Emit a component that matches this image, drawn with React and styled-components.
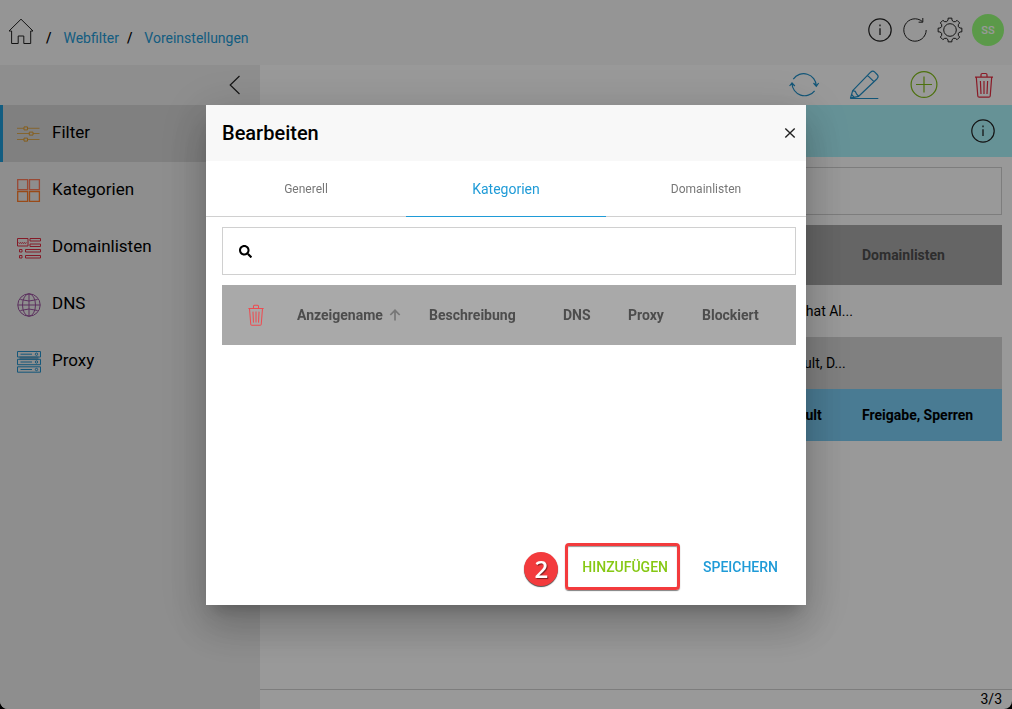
import { useState } from 'react'
import styled, { createGlobalStyle } from 'styled-components'
import { FaSearch } from 'react-icons/fa'

const GlobalStyle = createGlobalStyle`
  * {
    box-sizing: border-box;
  }

  body {
    margin: 0;
    background: #000;
    color: #000;
    font-family: Roboto, 'Liberation Sans', sans-serif;
    font-size: 14px;
  }

  button,
  input {
    font-family: inherit;
  }

  button {
    padding: 0;
    border: 0;
    background: none;
    cursor: pointer;
  }
`

const Page = styled.div`
  display: flex;
  flex-direction: column;
  min-height: 100vh;
  overflow: hidden;
  border-radius: 0 0 8px 8px;
  background: #fff;
`

const Header = styled.header`
  display: flex;
  justify-content: space-between;
  align-items: flex-start;
  height: 65px;
  padding: 14px 8px 0;
  background: #f8f8f8;
`

const Breadcrumb = styled.nav`
  display: flex;
  align-items: flex-start;
  padding-top: 4px;
  line-height: 20px;
`

const Crumbs = styled.ol`
  display: flex;
  margin: 10px 0 0 12px;
  padding: 0;
  list-style: none;

  li::before {
    content: '/';
    margin-right: 12px;
    font-weight: 500;
  }

  li + li {
    margin-left: 8px;
  }

  a {
    color: #1f9bd7;
    text-decoration: none;
  }
`

const HeaderActions = styled.div`
  display: flex;
  align-items: center;
  gap: 9px;
`

const IconButton = styled.button`
  display: flex;
  align-items: center;
  justify-content: center;
  width: ${(props) => props.$size || 26}px;
  height: ${(props) => props.$size || 26}px;
  color: ${(props) => props.$color || '#222'};
`

const Avatar = styled.button`
  width: 32px;
  height: 32px;
  border-radius: 50%;
  background: #98ff7b;
  color: #fff;
  font-size: 11px;
  font-weight: 500;
`

const Body = styled.div`
  display: flex;
  flex: 1;
`

const Sidebar = styled.aside`
  flex: 0 0 260px;
  background: #ededed;
`

const Collapse = styled.div`
  display: flex;
  justify-content: flex-end;
  padding: 7px 12px 7px 0;
`

const MenuItem = styled.a`
  display: flex;
  align-items: center;
  gap: 11px;
  height: 57px;
  padding-left: 14px;
  border-left: 3px solid ${(props) => (props.$active ? '#1f9bd7' : 'transparent')};
  background: ${(props) => (props.$active ? '#d5d5d5' : 'transparent')};
  color: #000;
  font-size: 17px;
  text-decoration: none;

  span {
    padding-bottom: 4px;
  }
`

const Main = styled.main`
  display: flex;
  flex: 1;
  flex-direction: column;
  min-width: 0;
`

const Toolbar = styled.div`
  display: flex;
  justify-content: flex-end;
  gap: 20px;
  height: 40px;
  padding-right: 8px;
`

const Banner = styled.div`
  display: flex;
  align-items: center;
  justify-content: flex-end;
  height: 52px;
  padding-right: 16px;
  background: #aaf3fb;
`

const Content = styled.div`
  flex: 1;
  padding: 10px;
`

const SearchField = styled.label`
  display: flex;
  align-items: center;
  gap: 12px;
  height: 48px;
  margin-bottom: 10px;
  padding: 0 16px;
  border: 1px solid #d0d0d0;

  input {
    flex: 1;
    height: 30px;
    border: 0;
    outline: 0;
    background: none;
    font-size: 14px;
  }
`

const Table = styled.table`
  width: 100%;
  table-layout: fixed;
  border-collapse: collapse;

  th,
  td {
    height: 52px;
    padding: 0;
    text-align: left;
    white-space: nowrap;
  }

  th {
    height: 60px;
    background: #a9a9a9;
    color: #4d4d4d;
    font-weight: 700;
  }
`

const Row = styled.tr`
  background: ${(props) => (props.$selected ? '#7bcdf5' : props.$striped ? '#d5d5d5' : '#fff')};
  font-weight: ${(props) => (props.$selected ? 700 : 400)};
`

const Footer = styled.footer`
  height: 20px;
  padding-right: 10px;
  border-top: 1px solid #d0d0d0;
  line-height: 18px;
  text-align: right;
`

const Overlay = styled.div`
  position: fixed;
  inset: 0;
  display: flex;
  align-items: center;
  justify-content: center;
  padding-top: 1px;
  background: rgba(0, 0, 0, 0.4);
`

const Dialog = styled.section`
  display: flex;
  flex-direction: column;
  width: 600px;
  max-width: 100%;
  min-height: 500px;
  background: #fff;
  box-shadow: 0 11px 15px -7px rgba(0, 0, 0, 0.2), 0 24px 38px 3px rgba(0, 0, 0, 0.14),
    0 9px 46px 8px rgba(0, 0, 0, 0.12);
`

const DialogHeader = styled.div`
  display: flex;
  align-items: center;
  justify-content: space-between;
  height: 56px;
  padding: 0 8px 0 16px;
  background: #f8f8f8;
`

const DialogTitle = styled.h2`
  margin: 0;
  font-size: 20px;
  font-weight: 500;
`

const Tabs = styled.div`
  display: grid;
  grid-template-columns: repeat(3, 1fr);
`

const Tab = styled.button`
  height: 56px;
  border-bottom: 1px solid ${(props) => (props.$active ? '#1f9bd7' : '#d0d0d0')};
  color: ${(props) => (props.$active ? '#1f9bd7' : '#777')};
  font-size: ${(props) => (props.$active ? 14 : 12)}px;
`

const DialogContent = styled.div`
  flex: 1;
  padding: 10px 10px 10px 16px;
`

const Sort = styled.span`
  display: flex;
  align-items: center;
  gap: 6px;

  svg {
    color: #777;
  }
`

const RowAction = styled.div`
  padding-left: 22px;
`

const DialogActions = styled.div`
  display: flex;
  justify-content: flex-end;
  gap: 11px;
  padding: 0 16px 20px;
`

const ActionButton = styled.button`
  height: 36px;
  padding: 0 12px;
  color: ${(props) => props.$color};
  font-size: 14px;
  font-weight: 500;
  text-transform: uppercase;
`

const Highlight = styled.div`
  position: relative;

  &::after {
    content: '';
    position: absolute;
    inset: -6px 0 -5px -5px;
    border: 3px solid #f33b3d;
    border-radius: 4px;
    box-shadow: 0 1px 1px rgba(0, 0, 0, 0.5), inset 0 1px 1px rgba(0, 0, 0, 0.4);
    pointer-events: none;
  }
`

const Step = styled.span`
  position: absolute;
  top: 3px;
  right: calc(100% + 12px);
  width: 34px;
  height: 34px;
  border-radius: 50%;
  background: #f33b3d;
  box-shadow: 0 1px 1px rgba(0, 0, 0, 0.7);
  color: #fff;
  font: 600 24px/34px 'Open Sans', sans-serif;
  text-align: center;
  text-shadow: 1px 1px 1px rgba(0, 0, 0, 0.5);
`

function Icon({ size = 26, children }) {
  return (
    <svg
      width={size}
      height={size}
      viewBox={`0 0 ${size} ${size}`}
      fill="none"
      stroke="currentColor"
      aria-hidden="true"
    >
      {children}
    </svg>
  )
}

const HomeIcon = () => (
  <Icon>
    <path d="M1 13 13 1.2 25 13H22.7V25.5H15.8V18H10.2V25.5H3.6V13Z" />
  </Icon>
)

const InfoIcon = () => (
  <Icon>
    <circle cx="13" cy="13" r="11.2" strokeWidth="1.2" />
    <path d="M13 11.3v6.7M13 7.5v1.8" strokeWidth="1.3" />
  </Icon>
)

const ReloadIcon = () => (
  <Icon>
    <path d="M24.2 13A11.2 11.2 0 1 1 20.3 4.5M20.8 1v4.2h-4.2" />
  </Icon>
)

const polar = (angle, radius) => {
  const rad = (angle * Math.PI) / 180
  return `${(13 + radius * Math.cos(rad)).toFixed(2)} ${(13 + radius * Math.sin(rad)).toFixed(2)}`
}

const gearPath = [0, 45, 90, 135, 180, 225, 270, 315]
  .map(
    (a, i) =>
      `${i ? 'L' : 'M'}${polar(a - 9, 12)}L${polar(a + 9, 12)}L${polar(a + 11, 10.2)}Q${polar(a + 22.5, 7.8)} ${polar(a + 34, 10.2)}`
  )
  .join('')

const GearIcon = () => (
  <Icon>
    <circle cx="13" cy="13" r="6.3" />
    <path d={`${gearPath}Z`} strokeLinejoin="round" />
  </Icon>
)

const SyncIcon = () => (
  <Icon size={30}>
    <path
      d="M4.3 9.2A12.6 12.6 0 0 1 27.3 16M24.5 13l2.8 3.2 2.4-3.2M25.6 20.8A12.6 12.6 0 0 1 3 13.2M.6 16 3 13l2.8 3"
      strokeWidth="1.2"
    />
  </Icon>
)

const PencilIcon = () => (
  <Icon size={30}>
    <path
      d="M1.5 28.2 3.7 20.6 21.6 2.2q2.2-2 4.2 0l2.3 2.3q2 2.1 0 4.2L9.7 26.3ZM3.7 20.6l2.6.8 1.2 2.4 2.2 2.5M18.5 5.4l6.7 6.5M1.3 28.5H29.3M2.6 24.5l2.6 2.8"
      strokeWidth="1.2"
      strokeLinejoin="round"
    />
  </Icon>
)

const PlusIcon = () => (
  <Icon size={30}>
    <circle cx="15" cy="14.5" r="12.9" strokeWidth="1.2" />
    <path d="M15 6.5v16M7 14.5h16" strokeWidth="1.2" />
  </Icon>
)

const TrashIcon = ({ size = 26 }) => (
  <svg width={size} height={size} viewBox="0 0 26 26" fill="none" stroke="currentColor" strokeWidth="1.2" aria-hidden="true">
    <path d="M4 5.2h18M10 5V2.8q0-1.3 1.3-1.3h3.4Q16 1.5 16 2.8V5M5.3 5.2 6.8 24q.1 1.2 1.3 1.2h9.8q1.2 0 1.3-1.2L20.7 5.2M9.4 9l.6 13M13 9v13M16.6 9 16 22" />
  </svg>
)

const ChevronIcon = () => (
  <Icon>
    <path d="M17.5 4 8.2 13l9.3 9" strokeWidth="1.2" />
  </Icon>
)

const CloseIcon = () => (
  <Icon size={16}>
    <path d="m3.3 3.5 9.4 9M12.7 3.5l-9.4 9" strokeWidth="1.4" />
  </Icon>
)

const ArrowUpIcon = () => (
  <Icon size={12}>
    <path d="M6 11.5V1.8M1.3 6 6 1.3 10.7 6" strokeWidth="1.7" />
  </Icon>
)

const MenuIcons = {
  filter: (
    <g stroke="#e09c2c">
      <path d="M0 6.3h7M10.5 6.3h12M0 11.5h12.3M16 11.5h6.5M0 17.5h7M10.5 17.5h12" strokeWidth=".8" />
      <path d="M7 4.9h3.5v3H7zM12.3 10.1H16v3h-3.7zM7 16.1h3.5v3H7z" />
    </g>
  ),
  kategorien: (
    <g strokeWidth="1.3">
      <path d="M.7.7h9.9v9.9H.7zM12.5.7h9.9v9.9h-9.9z" stroke="#ff7a58" />
      <path d="M.7 12.5h9.9v9.9H.7zM12.5 12.5h9.9v9.9h-9.9z" stroke="#ff7c28" />
    </g>
  ),
  domainlisten: (
    <g stroke="#de2c42">
      <path d="M.5 2.5h10.5V10H.5zM13 2.5h10.5V5H13zM13 8h10.5v2.5H13zM2.5 13.5H5V16H2.5zM8.5 13.5h15V16h-15zM2.5 19.5H5V22H2.5zM8.5 19.5h15V22h-15z" />
      <path d="m1.5 6.2 1 1.6 1-1.6 1 1.6 1-1.6 1 1.6 1-1.6 1 1.6 1-1.6" strokeWidth=".7" />
    </g>
  ),
  dns: (
    <g stroke="#98509d">
      <circle cx="12" cy="12" r="11.2" />
      <ellipse cx="12" cy="12" rx="6.5" ry="11.2" />
      <path d="M12 .8v22.4M.8 12h22.4M3.4 6.5Q12 9.5 20.6 6.5M3.4 17.5Q12 14.5 20.6 17.5" />
    </g>
  ),
  proxy: (
    <g stroke="#2492cc">
      <path d="M2.5 6.5h19v3.5h-19z" fill="#8caabe" stroke="none" />
      <path d="M.5 1.5h23V7H.5zM.5 9.3h23v5.4H.5zM.5 16.8h23v5.4H.5zM3.5 4.2H15M3.5 12H15M3.5 19.5H15" />
      <circle cx="19.5" cy="4.2" r="1.2" />
      <circle cx="19.5" cy="12" r="1.2" />
      <circle cx="19.5" cy="19.5" r="1.2" />
    </g>
  ),
}

const menu = [
  { id: 'filter', label: 'Filter' },
  { id: 'kategorien', label: 'Kategorien' },
  { id: 'domainlisten', label: 'Domainlisten' },
  { id: 'dns', label: 'DNS' },
  { id: 'proxy', label: 'Proxy' },
]

const filters = [
  { id: 1, kategorien: 'Default, Tel Chat Al...', domainlisten: '' },
  { id: 2, kategorien: 'Default, Default, D...', domainlisten: '' },
  { id: 3, kategorien: 'Default, Default', domainlisten: 'Freigabe, Sperren' },
]

const tabs = ['Generell', 'Kategorien', 'Domainlisten']

function EditDialog() {
  const [tab, setTab] = useState('Kategorien')

  return (
    <Overlay>
      <Dialog role="dialog" aria-modal="true" aria-labelledby="dialog-title">
        <DialogHeader>
          <DialogTitle id="dialog-title">Bearbeiten</DialogTitle>
          <IconButton $size={16} aria-label="Schließen">
            <CloseIcon />
          </IconButton>
        </DialogHeader>
        <Tabs role="tablist">
          {tabs.map((name) => (
            <Tab key={name} role="tab" aria-selected={tab === name} $active={tab === name} onClick={() => setTab(name)}>
              {name}
            </Tab>
          ))}
        </Tabs>
        <DialogContent>
          <SearchField>
            <FaSearch size={13} />
            <input type="text" aria-label="Kategorien suchen" />
          </SearchField>
          <Table>
            <colgroup>
              <col style={{ width: 75 }} />
              <col style={{ width: 132 }} />
              <col style={{ width: 134 }} />
              <col style={{ width: 65 }} />
              <col style={{ width: 74 }} />
              <col />
            </colgroup>
            <thead>
              <tr>
                <th>
                  <RowAction>
                    <IconButton $size={24} $color="#ee4b50" aria-label="Löschen">
                      <TrashIcon size={22} />
                    </IconButton>
                  </RowAction>
                </th>
                <th aria-sort="ascending">
                  <Sort>
                    Anzeigename
                    <ArrowUpIcon />
                  </Sort>
                </th>
                <th>Beschreibung</th>
                <th>DNS</th>
                <th>Proxy</th>
                <th>Blockiert</th>
              </tr>
            </thead>
          </Table>
        </DialogContent>
        <DialogActions>
          <Highlight>
            <Step>2</Step>
            <ActionButton $color="#86c814">Hinzufügen</ActionButton>
          </Highlight>
          <ActionButton $color="#1f9bd7">Speichern</ActionButton>
        </DialogActions>
      </Dialog>
    </Overlay>
  )
}

export default function App() {
  return (
    <>
      <GlobalStyle />
      <Page>
        <Header>
          <Breadcrumb aria-label="Pfad">
            <IconButton aria-label="Startseite">
              <HomeIcon />
            </IconButton>
            <Crumbs>
              <li>
                <a href="#webfilter">Webfilter</a>
              </li>
              <li>
                <a href="#voreinstellungen">Voreinstellungen</a>
              </li>
            </Crumbs>
          </Breadcrumb>
          <HeaderActions>
            <IconButton aria-label="Info">
              <InfoIcon />
            </IconButton>
            <IconButton aria-label="Neu laden">
              <ReloadIcon />
            </IconButton>
            <IconButton aria-label="Einstellungen">
              <GearIcon />
            </IconButton>
            <Avatar>SS</Avatar>
          </HeaderActions>
        </Header>
        <Body>
          <Sidebar>
            <Collapse>
              <IconButton aria-label="Menü einklappen">
                <ChevronIcon />
              </IconButton>
            </Collapse>
            <nav>
              {menu.map((item) => (
                <MenuItem key={item.id} href={`#${item.id}`} $active={item.id === 'filter'}>
                  <Icon size={24}>{MenuIcons[item.id]}</Icon>
                  <span>{item.label}</span>
                </MenuItem>
              ))}
            </nav>
          </Sidebar>
          <Main>
            <Toolbar>
              <IconButton $size={40} $color="#1f8fc8" aria-label="Aktualisieren">
                <SyncIcon />
              </IconButton>
              <IconButton $size={40} $color="#1f8fc8" aria-label="Bearbeiten">
                <PencilIcon />
              </IconButton>
              <IconButton $size={40} $color="#80bc18" aria-label="Hinzufügen">
                <PlusIcon />
              </IconButton>
              <IconButton $size={40} $color="#e62c40" aria-label="Löschen">
                <TrashIcon />
              </IconButton>
            </Toolbar>
            <Banner>
              <IconButton aria-label="Hinweis">
                <InfoIcon />
              </IconButton>
            </Banner>
            <Content>
              <SearchField>
                <FaSearch size={13} />
                <input type="text" aria-label="Filter suchen" />
              </SearchField>
              <Table>
                <colgroup>
                  <col />
                  <col style={{ width: 138 }} />
                  <col style={{ width: 140 }} />
                </colgroup>
                <thead>
                  <tr>
                    <th>Anzeigename</th>
                    <th>Kategorien</th>
                    <th>Domainlisten</th>
                  </tr>
                </thead>
                <tbody>
                  {filters.map((filter, index) => (
                    <Row key={filter.id} $striped={index % 2 === 1} $selected={filter.id === 3}>
                      <td />
                      <td>{filter.kategorien}</td>
                      <td>{filter.domainlisten}</td>
                    </Row>
                  ))}
                </tbody>
              </Table>
            </Content>
            <Footer>3/3</Footer>
          </Main>
        </Body>
      </Page>
      <EditDialog />
    </>
  )
}
